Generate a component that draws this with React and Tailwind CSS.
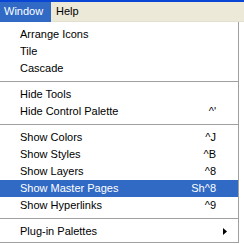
import React from 'react';

const font = { fontFamily: '"Liberation Sans", Arial, sans-serif' };

const sections = [
    [{ label: 'Arrange Icons' }, { label: 'Tile' }, { label: 'Cascade' }],
    [{ label: 'Hide Tools' }, { label: 'Hide Control Palette', key: "^'" }],
    [
        { label: 'Show Colors', key: '^J' },
        { label: 'Show Styles', key: '^B' },
        { label: 'Show Layers', key: '^8' },
        { label: 'Show Master Pages', key: 'Sh^8', active: true },
        { label: 'Show Hyperlinks', key: '^9' },
    ],
    [{ label: 'Plug-in Palettes', sub: true }],
];

const MenuItem = ({ item }) => (
    <div
        className={`h-[17px] flex items-center pl-[20px] pr-[22px] ${
            item.active ? 'bg-[#316ac5] text-white' : 'text-black'
        }`}
    >
        <span className="flex-1">{item.label}</span>
        {item.key && <span>{item.key}</span>}
        {item.sub && (
            <svg width="4" height="7" viewBox="0 0 4 7" className="mr-[-11px]">
                <path d="M0 0 L4 3.5 L0 7 Z" fill="#000" />
            </svg>
        )}
    </div>
);

const App = () => {
    return (
        <div className="w-[244px] h-[244px] overflow-hidden bg-white text-[11px] leading-none" style={font}>
            {/* menu bar */}
            <div className="h-[2px] bg-[#0a46d6]"></div>
            <div className="h-[20px] flex items-center bg-[#ece9d8] border-b border-[#e4e0d0]">
                <div className="h-[20px] w-[51px] pl-[4px] flex items-center bg-[#316ac5] text-white">Window</div>
                <div className="pl-[5px] text-black">Help</div>
            </div>

            {/* dropdown */}
            <div className="w-[239px] border-r border-[#a0a0a0] pt-[4px]">
                {sections.map((sec, i) => (
                    <div key={i}>
                        {i > 0 && (
                            <div className="h-[9px] flex items-center">
                                <div className="w-full h-[2px] border-t border-[#a0a0a0] border-b border-b-white"></div>
                            </div>
                        )}
                        {sec.map((item) => (
                            <MenuItem key={item.label} item={item} />
                        ))}
                    </div>
                ))}
                <div className="h-[1px] bg-[#a0a0a0] mt-[2px]"></div>
            </div>
        </div>
    );
};

export default App;
